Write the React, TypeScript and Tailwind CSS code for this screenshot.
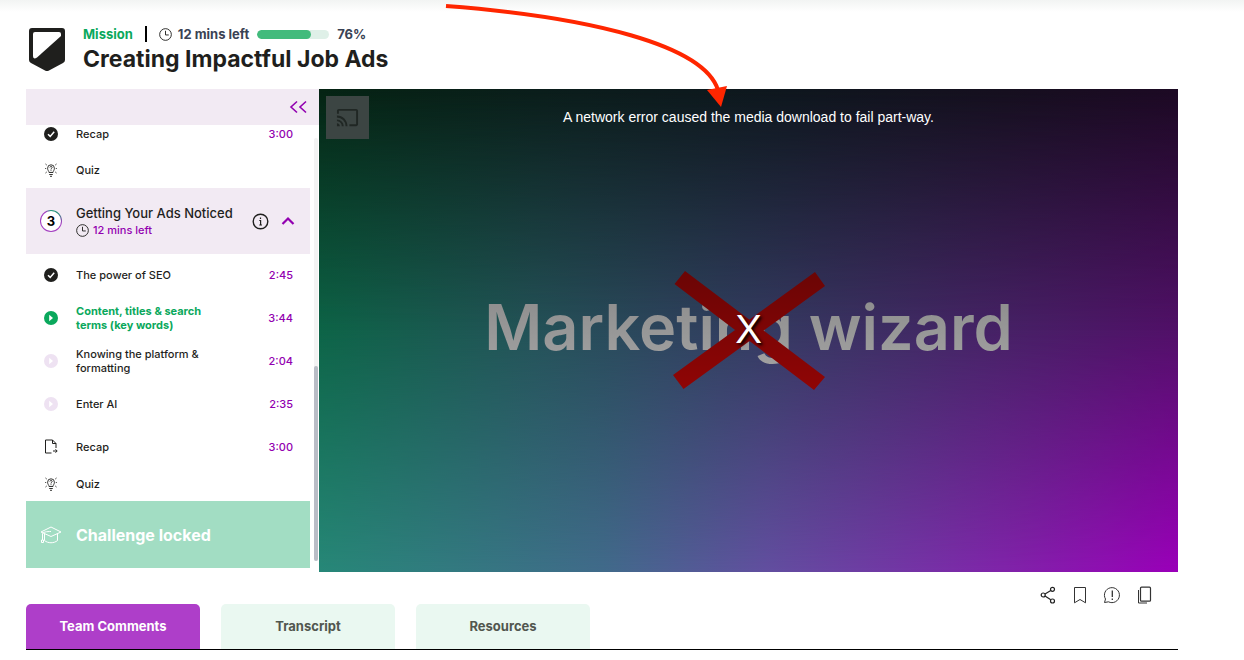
import type { ReactNode } from "react";
import { MdCast } from "react-icons/md";

type Status = "done" | "current" | "upcoming" | "document" | "quiz";

function Shield() {
  return (
    <svg width="36" height="44" viewBox="0 0 36 44" aria-hidden="true">
      <path d="M3 0H33Q36 0 36 3V32Q36 34 34 35L20 42.500Q18 43.500 16 42.500L2 35Q0 34 0 32V3Q0 0 3 0Z" fill="#1f1f1d" />
      <path d="M6 4H30Q32 4 32 6V8L8 29.500Q4 32 4 28V6Q4 4 6 4Z" fill="#fff" />
    </svg>
  );
}

function Clock({ className }: { className: string }) {
  return (
    <svg className={className} viewBox="0 0 14 14" fill="none" stroke="#1f1f1d" aria-hidden="true">
      <circle cx="7" cy="7" r="6.300" />
      <path d="M7 3V7.500H10.500" />
    </svg>
  );
}

function Bulb() {
  return (
    <svg width="12" height="14" viewBox="1 0 12 14" fill="none" stroke="#1f1f1d" strokeWidth="0.900" aria-hidden="true">
      <path d="M5 9.500C5 8 3.600 7.500 3.600 5.200A3.400 3.400 0 0 1 10.400 5.200C10.400 7.500 9 8 9 9.500ZM5.200 11.500H8.800M6 13.300H8" />
      <path d="M5.900 4.500C5.900 3 8.200 3 8.100 4.500C8 5.300 7 5.400 7 6.500M7 7.300V8.200" />
      <path d="M1.500 1L2.700 2M12.500 1L11.300 2M1.200 5.500H2.200M12.800 5.500H11.800M1.500 10L2.700 9M12.500 10L11.300 9" />
    </svg>
  );
}

function StatusIcon({ status }: { status: Status }) {
  if (status === "quiz") return <Bulb />;
  if (status === "document") {
    return (
      <svg width="14" height="15" viewBox="0 0 14 15" fill="none" stroke="#1f1f1d" aria-hidden="true">
        <path d="M7.500 14H1.500V1H8.500L12 4.500V9M8.500 1V4.500H12" />
        <path d="M9 12H13M11.500 10.300L13.200 12L11.500 13.700" />
      </svg>
    );
  }
  if (status === "done") {
    return (
      <svg width="14" height="14" viewBox="0 0 14 14" aria-hidden="true">
        <circle cx="7" cy="7" r="7" fill="#1f1f1d" />
        <path d="M4 7.300L6.200 9.400L10.200 4.800" fill="none" stroke="#fff" strokeWidth="1.500" />
      </svg>
    );
  }
  return (
    <svg width="14" height="14" viewBox="0 0 14 14" aria-hidden="true">
      <circle cx="7" cy="7" r="7" fill={status === "current" ? "#0aa85c" : "#eee2f2"} />
      <path d="M5.200 3.800L9 7L5.200 10.200Z" fill="#fff" />
    </svg>
  );
}

function Lesson({ status, title, time, className }: { status: Status; title: ReactNode; time?: string; className: string }) {
  const current = status === "current";
  return (
    <li className={`flex items-center pr-[17px] ${className}`}>
      <span className="flex w-[50px] shrink-0 justify-center">
        <StatusIcon status={status} />
      </span>
      <a
        href="#lesson"
        className={`flex-1 text-[11px] leading-[14px] ${current ? "font-bold text-[#0aa85c]" : "font-medium text-[#1f1f1d]"}`}
      >
        {title}
      </a>
      {time && <span className="text-[11px] leading-[14px] font-medium text-[#9200b0]">{time}</span>}
    </li>
  );
}

function Header() {
  return (
    <header className="flex h-[89px] items-start pt-6 pl-[3px]">
      <div className="mr-[18px] pt-1">
        <Shield />
      </div>
      <div>
        <div className="flex h-5 items-center text-[13px] leading-5 font-bold text-[#3a4254]">
          <span className="text-[#0aa85c]">Mission</span>
          <span className="mx-3 h-4 w-[2px] bg-black" />
          <Clock className="mr-[6px] size-[13px]" />
          <span>12 mins left</span>
          <span className="mx-2 h-[9px] w-[72px] overflow-hidden rounded-full bg-[#dff0e8]">
            <span className="block h-full w-3/4 rounded-full bg-[#42bb7c]" />
          </span>
          <span>76%</span>
        </div>
        <h1 className="text-[23px] leading-[30px] font-bold text-[#1f1f1d]">Creating Impactful Job Ads</h1>
      </div>
    </header>
  );
}

function Sidebar() {
  return (
    <aside className="w-[293px] shrink-0">
      <div className="flex h-9 items-center justify-end bg-[#f2eaf3] pr-3">
        <button aria-label="Collapse lessons">
          <svg width="18" height="14" viewBox="0 0 18 14" fill="none" stroke="#9200b0" strokeWidth="1.600">
            <path d="M8 1.500L2 7L8 12.500M17 1.500L11 7L17 12.500" />
          </svg>
        </button>
      </div>
      <div className="flex">
        <ul className="flex-1">
          <Lesson status="done" title="Recap" time="3:00" className="h-[27px] pb-[9px]" />
          <Lesson status="quiz" title="Quiz" className="h-9" />
          <li className="flex h-[66px] items-center bg-[#f2eaf3] pr-[15px]">
            <span className="flex w-[50px] shrink-0 justify-center">
              <span className="flex size-[22px] rounded-full bg-[conic-gradient(#1f9a78_0deg,#278878_45deg,#a33cc0_100deg,#a33cc0_330deg,#1f9a78_360deg)] p-px">
                <span className="flex flex-1 items-center justify-center rounded-full bg-white text-[13px] leading-4 font-bold">3</span>
              </span>
            </span>
            <div className="flex-1 text-[#1f1f1d]">
              <h2 className="text-[13px] leading-[18px] font-medium whitespace-nowrap">Getting Your Ads Noticed</h2>
              <p className="flex items-center gap-1 text-[11px] leading-4 font-medium text-[#9200b0]">
                <Clock className="size-[13px]" />
                12 mins left
              </p>
            </div>
            <button aria-label="Section details" className="mr-3">
              <svg width="17" height="17" viewBox="0 0 17 17" fill="none" stroke="#1f1f1d" strokeWidth="1.400">
                <circle cx="8.500" cy="8.500" r="7.300" />
                <path d="M7.300 7.500H8.600V12M7.300 12H10M8.500 4.500V6" strokeWidth="1.200" />
              </svg>
            </button>
            <button aria-label="Collapse section">
              <svg width="14" height="10" viewBox="0 0 14 10" fill="none" stroke="#9200b0" strokeWidth="2.200">
                <path d="M1.500 8L7 2.500L12.500 8" />
              </svg>
            </button>
          </li>
          <Lesson status="done" title="The power of SEO" time="2:45" className="h-[43px] pb-[2px]" />
          <Lesson status="current" title={<>Content, titles &amp; search<br />terms (key words)</>} time="3:44" className="h-[43px] pb-[2px]" />
          <Lesson status="upcoming" title={<>Knowing the platform &amp;<br />formatting</>} time="2:04" className="h-[43px] pb-[2px]" />
          <Lesson status="upcoming" title="Enter AI" time="2:35" className="h-[43px] pb-[2px]" />
          <Lesson status="document" title="Recap" time="3:00" className="h-[43px] pb-[2px]" />
          <Lesson status="quiz" title="Quiz" className="h-8 pb-[2px]" />
          <li className="flex h-[67px] items-center bg-[#a2ddc3] text-base font-bold text-white">
            <span className="flex w-[50px] shrink-0 justify-center">
              <svg width="22" height="18" viewBox="0 0 22 18" fill="none" stroke="#fff" aria-hidden="true">
                <path d="M1 6L11 1L21 6L11 10.500ZM4.500 8V14.500C8 17.500 14 17.500 17.500 14.500V8M11 5.500C7 5.500 2.500 6 2.500 8V14" />
                <path d="M1.500 14H3.500V16.500H1.500Z" />
              </svg>
            </span>
            Challenge locked
          </li>
        </ul>
        <div className="mr-px ml-1 flex w-1 flex-col pt-[13px] pb-[7px]">
          <div className="flex flex-1 flex-col justify-end rounded-full bg-[#f3f3f3]">
            <div className="h-[46%] rounded-full bg-[#b9bdc6]" />
          </div>
        </div>
      </div>
    </aside>
  );
}

function Player() {
  return (
    <section
      aria-label="Video player"
      className="relative isolate aspect-video min-w-0 flex-1 overflow-hidden bg-[linear-gradient(to_right,#278878,#416b8b_33%,#624fa0_52%,#8320ab_82%,#9b00ba)]"
    >
      <div className="absolute inset-0 -z-10 bg-[linear-gradient(to_right,#0d6447,#245258_25%,#333c60_50%,#442565_75%,#511068)] [mask-image:linear-gradient(to_bottom,black_50%,transparent)]" />
      <div className="absolute inset-0 -z-10 bg-[linear-gradient(to_right,#052313,#0b1c1b_30%,#0e161d_55%,#150f1e_80%,#1c0923)] [mask-image:linear-gradient(to_bottom,black,transparent_50%)]" />
      <button
        aria-label="Cast"
        className="absolute top-[7px] left-[7px] flex size-[43px] items-center justify-center bg-[#3c4543] text-[#202724]"
      >
        <MdCast size={23} />
      </button>
      <p className="pt-[19px] text-center font-['Liberation_Sans',sans-serif] text-[14px] leading-[18px] text-white">
        A network error caused the media download to fail part-way.
      </p>
      <div className="absolute inset-0 flex items-center justify-center pb-2">
        <p className="bg-linear-to-b from-[#8b8b8b] to-[#a1a1a1] bg-clip-text text-[63px] leading-[80px] font-semibold whitespace-nowrap text-transparent">
          Marketing wizard
        </p>
      </div>
      <div className="absolute inset-0 flex items-center justify-center">
        <svg width="152" height="120" viewBox="672 271 152 120" aria-hidden="true">
          <defs>
            <linearGradient id="cross" x1="0" y1="271" x2="0" y2="391" gradientUnits="userSpaceOnUse">
              <stop stopColor="#6b0505" />
              <stop offset="1" stopColor="#900505" />
            </linearGradient>
          </defs>
          <path fill="url(#cross)" d="M684 271L824 377L813 390L673.500 284ZM814 272L824 286L682.500 389L672 375Z" />
        </svg>
      </div>
      <div className="absolute inset-0 flex items-center justify-center pb-1 font-['Liberation_Sans',sans-serif] text-[40px] leading-10 text-white [text-shadow:2px_2px_3px_black]">
        X
      </div>
    </section>
  );
}

function Actions() {
  return (
    <div className="flex justify-end gap-[14px] pt-[14px] pr-[25px]">
      <button aria-label="Share">
        <svg width="18" height="18" viewBox="0 0 18 18" fill="none" stroke="#222" strokeWidth="1.200">
          <circle cx="13.500" cy="3.300" r="2" />
          <circle cx="4.200" cy="9" r="2" />
          <circle cx="13.500" cy="15" r="2" />
          <path d="M6 8L11.800 4.500M6 10L11.800 13.800" />
        </svg>
      </button>
      <button aria-label="Bookmark">
        <svg width="18" height="18" viewBox="0 0 18 18" fill="none" stroke="#333">
          <path d="M3.500 1.500H14.500V16.800L9 13.500L3.500 16.800Z" />
        </svg>
      </button>
      <button aria-label="Report a problem">
        <svg width="18" height="18" viewBox="0 0 18 18" fill="none" stroke="#333">
          <path d="M2.500 13A7.500 7.500 0 1 1 5.500 15.800L1.500 16.500Z" />
          <path d="M9.300 4.500V11M9.300 12.500V14" strokeWidth="1.300" />
        </svg>
      </button>
      <button aria-label="Copy">
        <svg width="18" height="18" viewBox="0 0 18 18" fill="none" stroke="#333">
          <rect x="5.500" y="1.200" width="10" height="14" rx="1" strokeWidth="1.200" />
          <path d="M3.500 4V17H12" />
        </svg>
      </button>
    </div>
  );
}

const tabs = ["Team Comments", "Transcript", "Resources"];

function Tabs() {
  return (
    <div role="tablist" className="flex gap-[21px] border-b border-black">
      {tabs.map((tab, index) => (
        <button
          key={tab}
          role="tab"
          aria-selected={index === 0}
          className={`h-[45px] w-[174px] rounded-t-[5px] text-[13px] font-bold ${
            index === 0 ? "bg-[#ae3ec9] text-white" : "bg-[#eaf8f1] text-[#51564f]"
          }`}
        >
          {tab}
        </button>
      ))}
    </div>
  );
}

export default function App() {
  return (
    <div className="relative bg-white bg-[linear-gradient(to_bottom,#f2f4f3,#ffffff_12px)] pr-[66px] pb-[10px] pl-[26px] font-[Inter,sans-serif]">
      <Header />
      <main>
        <div className="flex items-start">
          <Sidebar />
          <Player />
        </div>
        <Actions />
        <Tabs />
      </main>
      <svg className="pointer-events-none absolute top-0 left-[440px]" width="300" height="110" viewBox="440 0 300 110" aria-hidden="true">
        <path d="M446 6C590 17 704 45 718 90" fill="none" stroke="#ff2600" strokeWidth="4" />
        <path d="M707 90L727 86L721 107Z" fill="#ff2600" />
      </svg>
    </div>
  );
}
